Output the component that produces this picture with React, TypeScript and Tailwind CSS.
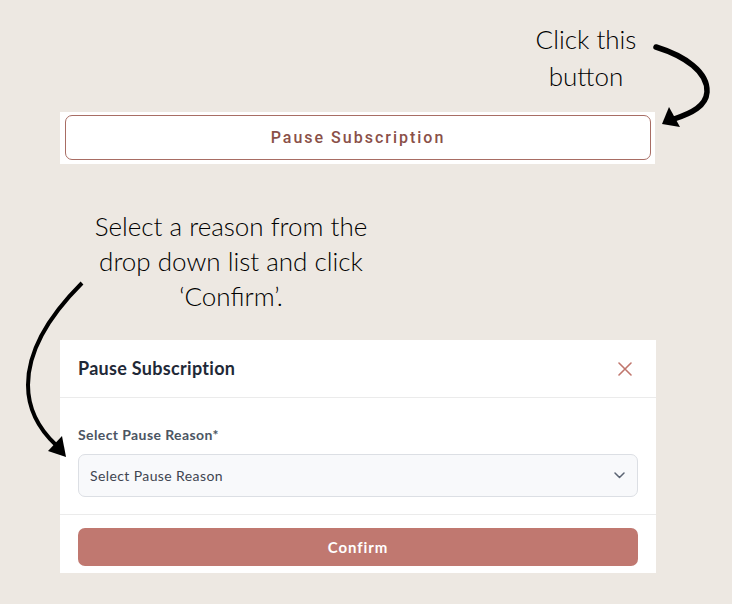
import React from "react";

function Arrows() {
  return (
    <svg
      className="pointer-events-none absolute left-0 top-0"
      width="732"
      height="604"
      viewBox="0 0 732 604"
      fill="none"
    >
      {/* top right arrow, pointing at the button */}
      <path
        d="M656 47 C685 56, 708 72, 707 92 C706 106, 692 113, 674 119"
        stroke="#000"
        strokeWidth="5.5"
        strokeLinecap="round"
      />
      <polygon points="662,124 669,107 680,127" fill="#000" />

      {/* left arrow, pointing at the select */}
      <path
        d="M82 283 C50 315, 28 350, 28 385 C28 410, 40 430, 56 445"
        stroke="#000"
        strokeWidth="4"
        strokeLinecap="butt"
      />
      <polygon points="66,457 48,451 62,436" fill="#000" />
    </svg>
  );
}

export default function App() {
  return (
    <div
      className="relative h-[604px] w-[732px] overflow-hidden bg-[#ede8e2]"
      style={{ fontFamily: "Lato, 'Noto Sans', sans-serif" }}
    >
      {/* Hint: click this button */}
      <div className="ml-[516px] w-[140px] pt-[21px] text-center text-[26px] font-light leading-[37px] text-black">
        <div>Click this</div>
        <div>button</div>
      </div>

      {/* Pause button strip */}
      <div className="ml-[60px] mt-[17px] w-[595px] bg-white pb-[4px] pl-[5px] pr-[4px] pt-[3px]">
        <button
          className="flex h-[45px] w-full items-center justify-center rounded-[7px] border-[1.5px] border-[#a86d64] bg-white text-[16px] font-medium tracking-[2px] text-[#8a5048]"
          style={{ fontFamily: "Roboto, 'Liberation Sans', sans-serif" }}
        >
          Pause Subscription
        </button>
      </div>

      {/* Hint: select a reason */}
      <div className="ml-[71px] mt-[45px] w-[320px] text-center text-[26px] font-light leading-[35px] text-black">
        <div>Select a reason from the</div>
        <div>drop down list and click</div>
        <div>‘Confirm’.</div>
      </div>

      {/* Modal */}
      <div className="ml-[60px] mt-[26px] flex h-[233px] w-[596px] flex-col bg-white">
        <div className="flex h-[58px] items-center justify-between border-b border-[#ebebeb] pl-[18px] pr-[24px]">
          <span className="text-[18px] font-bold tracking-[0.3px] text-[#1f2937]">Pause Subscription</span>
          <svg width="14" height="14" viewBox="0 0 14 14" fill="none">
            <path d="M1 1L13 13M13 1L1 13" stroke="#c0766d" strokeWidth="1.6" strokeLinecap="round" />
          </svg>
        </div>

        <div className="border-b border-[#ebebeb] px-[18px] pb-[17px] pt-[29px]">
          <label className="mb-[11px] block text-[14px] font-bold leading-[16px] tracking-[0.4px] text-[#4b5563]">
            Select Pause Reason*
          </label>
          <div className="flex h-[43px] items-center justify-between rounded-[7px] border border-[#dcdfe4] bg-[#f8f9fb] pl-[11px] pr-[12px]">
            <span className="text-[14px] tracking-[0.4px] text-[#3f4551]">Select Pause Reason</span>
            <svg width="11" height="7" viewBox="0 0 11 7" fill="none">
              <path d="M1 1L5.5 5.5L10 1" stroke="#5b6473" strokeWidth="1.5" strokeLinecap="round" strokeLinejoin="round" />
            </svg>
          </div>
        </div>

        <div className="px-[18px] pt-[13px]">
          <button className="flex h-[38px] w-full items-center justify-center rounded-[7px] bg-[#c07870] text-[15px] font-bold tracking-[0.9px] text-white">
            Confirm
          </button>
        </div>
      </div>

      <Arrows />
    </div>
  );
}
